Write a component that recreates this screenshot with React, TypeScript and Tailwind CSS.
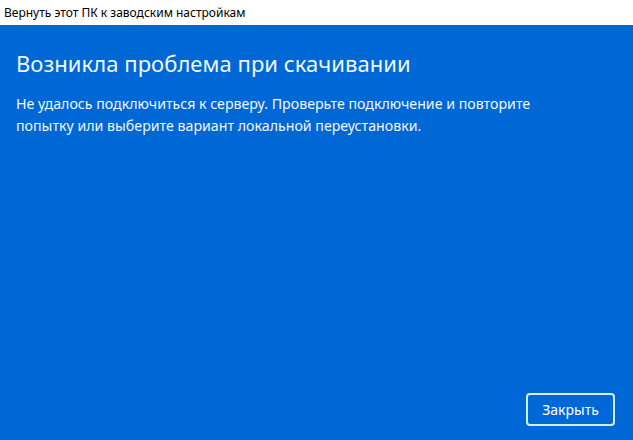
export default function App() {
  return (
    <div className="flex h-[440px] w-[633px] flex-col overflow-hidden bg-[#0067d6] font-['Segoe_UI','Noto_Sans',sans-serif]">
      <div className="flex h-[25px] shrink-0 items-center bg-white px-[4px] text-[12px] text-black">
        Вернуть этот ПК к заводским настройкам
      </div>
      <div className="flex flex-1 flex-col px-[16px] pb-[14px] pt-[22px] text-[#f2f8ff]">
        <h1 className="text-[22px] leading-[32px] font-normal tracking-[0.05px]">Возникла проблема при скачивании</h1>
        <p className="mt-[14px] text-[14.2px] leading-[22px]">
          Не удалось подключиться к серверу. Проверьте подключение и повторите
          <br />
          попытку или выберите вариант локальной переустановки.
        </p>
        <div className="mt-auto flex justify-end pr-[2px]">
          <button className="h-[33px] w-[89px] rounded-[4px] border-2 border-[#cfeeff] text-[14px] text-white">
            Закрыть
          </button>
        </div>
      </div>
    </div>
  );
}
